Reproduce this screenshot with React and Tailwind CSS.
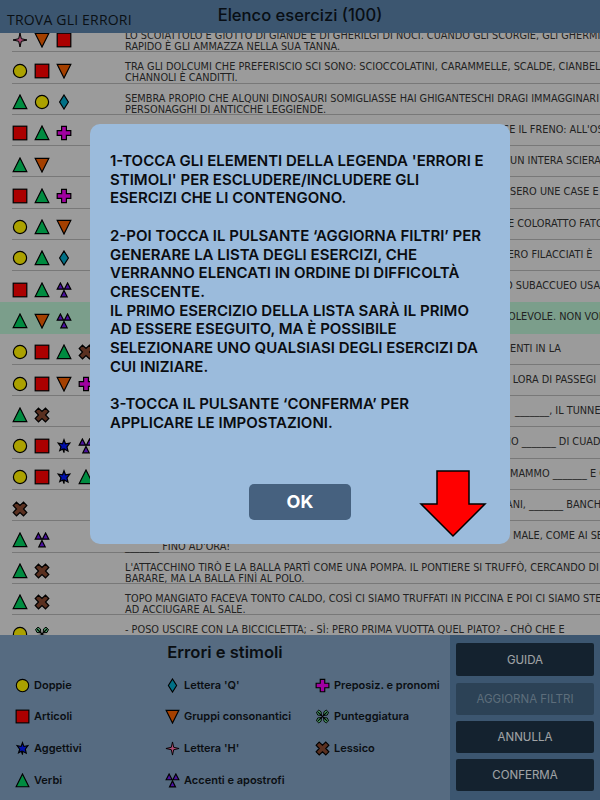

const Shape = ({ t, s = 16 }) => {
  const p = { stroke: "#000", strokeWidth: 1.2, strokeLinejoin: "miter" };
  const el = {
    circle: <circle cx="8" cy="8" r="6.6" fill="#fff000" {...p} />,
    square: <rect x="1.2" y="1.2" width="13.6" height="13.6" fill="#ff0000" {...p} />,
    tri: <path d="M8 1 L14.8 14.6 H1.2 Z" fill="#00d060" {...p} />,
    down: <path d="M1.2 1.4 H14.8 L8 15 Z" fill="#f56000" {...p} />,
    diamond: <path d="M8 1 L12.4 8 L8 15 L3.6 8 Z" fill="#00a8c8" {...p} />,
    plus: <path d="M5.6 1.4 H10.4 V5.6 H14.8 V10.4 H10.4 V14.6 H5.6 V10.4 H1.2 V5.6 H5.6 Z" fill="#f000f0" {...p} />,
    x: <path d="M4.5 1.2 L8 4.5 L11.5 1.2 L14.8 4.5 L11.5 8 L14.8 11.5 L11.5 14.8 L8 11.5 L4.5 14.8 L1.2 11.5 L4.5 8 L1.2 4.5 Z" fill="#874830" {...p} />,
    star: <path d="M8 1.8 L9.5 5.8 L13.8 5 L11 8.8 L12 13 L8.2 11 L8 14.6 L6.8 11 L3.8 12.6 L5 8.8 L2.2 5 L6.5 5.8 Z" fill="#0018ff" {...p} />,
    h: <path d="M8 1 L9.3 6.7 L15 8 L9.3 9.3 L8 15 L6.7 9.3 L1 8 L6.7 6.7 Z" fill="#ff70a8" {...p} strokeWidth="1" />,
    tre: <g fill="#7018f0" {...p}><path d="M4.4 1 L7.6 7.2 H1.2 Z" /><path d="M11.6 1 L14.8 7.2 H8.4 Z" /><path d="M8 8.4 L11.2 14.8 H4.8 Z" /></g>,
    punct: <g fill="#70f0a0" stroke="#000" strokeWidth="1"><path d="M1.5 3.5 L4 1.2 L6.5 3 L6.8 6.8 L3 6.5 Z" /><path d="M14.5 3.5 L12 1.2 L9.5 3 L9.2 6.8 L13 6.5 Z" /><path d="M1.5 12.5 L4 14.8 L6.5 13 L6.8 9.2 L3 9.5 Z" /><path d="M14.5 12.5 L12 14.8 L9.5 13 L9.2 9.2 L13 9.5 Z" /><path d="M3 3 L13 13 M13 3 L3 13" fill="none" strokeWidth="1.2" /></g>,
  }[t];
  return <svg width={s} height={s} viewBox="0 0 16 16" className="shrink-0">{el}</svg>;
};

const rows = [
  { icons: ["h", "down", "square"], a: "LO SCOIATTOLO E GIOTTO DI GIANDE E DI GHERILGI DI NOCI. CUANDO GLI SCORGIE, GLI GHERMISCE", b: "RAPIDO È GLI AMMAZZA NELLA SUA TANNA." },
  { icons: ["circle", "square", "down"], a: "TRA GLI DOLCUMI CHE PREFERISCIO SCI SONO: SCIOCCOLATINI, CARAMMELLE, SCALDE, CIANBELLE,", b: "CHANNOLI È CANDITTI." },
  { icons: ["tri", "circle", "diamond"], a: "SEMBRA PROPIO CHE ALQUNI DINOSAURI SOMIGLIASSE HAI GHIGANTESCHI DRAGI IMMAGGINARI", b: "PERSONAGGHI DI ANTICCHE LEGGIENDE." },
  { icons: ["square", "tri", "plus"], lead: "IL CICLISTA ANDAVA VELOCE PER LA STRADA IN DISCESA QUANDO PER", w: "w-[378px]", a: "SE IL FRENO: ALL'OSPEDALE" },
  { icons: ["tri", "down"], lead: "LE FORMICHE SI MOSSERO IN FILA INDIANA PER IL GIARDINO FORMANDO", w: "w-[385px]", a: "UN INTERA SCIERA" },
  { icons: ["square", "tri", "plus"], lead: "I RAGAZZI DEL PAESE IERI MATTINA COSTRUIRONO E POI DIPIN", w: "w-[385px]", a: "SERO UNE CASE E LE" },
  { icons: ["circle", "tri", "down"], lead: "IL MANTELLO DEL PRINCIPE ERA DI UN TESSUTO MOLTO BELLO", w: "w-[383px]", a: "E COLORATTO FATO" },
  { icons: ["circle", "tri", "diamond"], lead: "I VESTITI DI QUEI POVERI BAMBINI ERANO DAV", w: "w-[376px]", a: "VERO FILACCIATI È" },
  { icons: ["square", "tri", "tre"], lead: "IL SOMMOZZATORE SI TUFFÒ CON IL SUO APPARECCHI", w: "w-[380px]", a: "O SUBACCUEO USA" },
  { icons: ["tri", "down", "tre"], lead: "QUEL CAGNOLINO TANTO SIMPATICO È DAVVERO PIACEV", w: "w-[383px]", a: "OLEVOLE. NON VOL", hl: true },
  { icons: ["circle", "square", "tri", "x"], lead: "SULLA SPIAGGIA CI SONO TANTI OMBRELLONI E I CLI", w: "w-[385px]", a: "ENTI IN LA" },
  { icons: ["circle", "square", "down", "plus"], lead: "ALLA STAZIONE DEL TRENO ARRIVERÀ TRA POCHI MINUTI ALL", w: "w-[377px]", a: "O LORA DI PASSEGI" },
  { icons: ["tri", "x"], lead: "IL TRENO CORRE VELOCE SUI BINARI E ATTRAVERSA", w: "w-[390px]", a: "_______, IL TUNNEL" },
  { icons: ["circle", "square", "star", "tre"], lead: "LA MAESTRA HA DISEGNATO SULLA LAVAGNA UN GRANDISS", w: "w-[383px]", a: "IO _______ DI CUADERNI" },
  { icons: ["circle", "square", "star", "tri"], lead: "ALLA FESTA DELLA SCUOLA ABBIAMO PORTATO IL PAPÀ E LA", w: "w-[385px]", a: "MAMMO _______ E C" },
  { icons: ["x"], lead: "NEL GIARDINO DEI NONNI CI SONO TANTI GRANDI ALBERI E STR", w: "w-[381px]", a: "ANI, _______ BANCHI" },
  { icons: ["tri", "tre"], lead: "IERI IL MIO AMICO SI È SENTITO PROPRIO MOLTO", w: "w-[388px]", a: "MALE, COME AI SENTITO", b: "_______ FINO AD'ORA!" },
  { icons: ["tri", "x"], a: "L'ATTACCHINO TIRÒ E LA BALLA PARTÌ COME UNA POMPA. IL PONTIERE SI TRUFFÒ, CERCANDO DI", b: "BARARE, MA LA BALLA FINÌ AL POLO." },
  { icons: ["tri", "x"], a: "TOPO MANGIATO FACEVA TONTO CALDO, COSÌ CI SIAMO TRUFFATI IN PICCINA E POI CI SIAMO STESI", b: "AD ACCIUGARE AL SALE." },
  { icons: ["circle", "punct"], a: "- POSO USCIRE CON LA BICCICLETTA; - SÌ: PERO PRIMA VUOTTA QUEL PIATO? - CHÒ CHE E" },
];

const legend = [
  [["circle", "Doppie"], ["square", "Articoli"], ["star", "Aggettivi"], ["tri", "Verbi"]],
  [["diamond", "Lettera 'Q'"], ["down", "Gruppi consonantici"], ["h", "Lettera 'H'"], ["tre", "Accenti e apostrofi"]],
  [["plus", "Preposiz. e pronomi"], ["punct", "Punteggiatura"], ["x", "Lessico"]],
];

const sans = "font-['Inter',sans-serif]";

export default function App() {
  return (
    <div className={`relative w-[600px] h-[800px] overflow-hidden flex flex-col bg-[#e8e8e8] ${sans}`}>
      <header className="relative z-10 h-[33px] shrink-0 bg-[#5a80a8] flex items-center justify-center">
        <span className="absolute left-[7px] top-[13px] text-[14px] leading-[14px] tracking-[0.2px] text-[#101820] font-['Open_Sans',sans-serif]">TROVA GLI ERRORI</span>
        <span className="text-[16.6px] font-medium leading-[30px] pb-[3px] text-[#0d1620]">Elenco esercizi (100)</span>
      </header>

      <div className="flex-1 min-h-0 overflow-hidden">
        <div className="-mt-[12px]">
          {rows.map((r, i) => (
            <div key={i} className={`h-[31.28px] flex ${r.hl ? "bg-[#b8ecd0]" : ""}`}>
              <div className={`flex-1 min-w-0 ml-[12px] flex border-b ${i === 9 || i === 8 ? "border-transparent" : "border-[#b4b4b4]"}`}>
                <div className="w-[113px] shrink-0 flex items-center gap-[6px] pt-[7px]">
                  {r.icons.map((t, k) => <Shape key={k} t={t} />)}
                </div>
                <div className="min-w-0 pt-[9px] text-[9.75px] leading-[11.2px] whitespace-nowrap text-[#333333] font-['DejaVu_Sans',sans-serif]">
                  <div>
                    {r.lead && <span className={`inline-block overflow-hidden align-top ${r.w}`}>{r.lead}</span>}
                    {r.a}
                  </div>
                  {r.b && <div>{r.b}</div>}
                </div>
              </div>
            </div>
          ))}
        </div>
      </div>

      <footer className="relative h-[165px] shrink-0 flex">
        <div className="w-[450px] bg-[#81a0c0] flex flex-col">
          <h2 className="text-center text-[16.6px] font-semibold leading-[20px] mt-[7px] text-[#10161c]">Errori e stimoli</h2>
          <div className="flex pl-[15px] mt-[15px]">
            {legend.map((col, c) => (
              <div key={c} className="w-[150px] shrink-0 flex flex-col gap-[15.7px]">
                {col.map(([t, label]) => (
                  <div key={label} className="flex items-center gap-[4px] h-[16px]">
                    <Shape t={t} s={15} />
                    <span className="text-[11px] font-semibold text-[#10161c] whitespace-nowrap">{label}</span>
                  </div>
                ))}
              </div>
            ))}
          </div>
        </div>
        <div className="flex-1 bg-[#5a80a8] flex flex-col gap-[6px] px-[6px] pt-[8px] text-[11.5px]">
          <button className="h-[33px] pt-[2px] rounded-[2px] bg-[#1e3447] text-[#f0f4f8] mb-[1px]">GUIDA</button>
          <button className="h-[32px] pt-[1px] rounded-[2px] bg-[#426380] text-[#8ba3b8]">AGGIORNA FILTRI</button>
          <button className="h-[32px] pt-[2px] rounded-[2px] bg-[#1e3447] text-[#f0f4f8]">ANNULLA</button>
          <button className="h-[32px] pt-[2px] rounded-[2px] bg-[#1e3447] text-[#f0f4f8]">CONFERMA</button>
        </div>
      </footer>

      <div className="absolute inset-0 z-20 bg-black/[.33] flex justify-center pt-[124px]">
        <div className="relative w-[420px] h-[420px] rounded-[10px] bg-[#9bbbdc] px-[20px] pt-[28px] text-[#0a0c10] text-[15px] font-semibold leading-[18.7px] whitespace-nowrap">
          <p>1-TOCCA GLI ELEMENTI DELLA LEGENDA 'ERRORI E<br />STIMOLI' PER ESCLUDERE/INCLUDERE GLI<br />ESERCIZI CHE LI CONTENGONO.</p>
          <p className="mt-[18.7px]">2-POI TOCCA IL PULSANTE ‘AGGIORNA FILTRI’ PER<br />GENERARE LA LISTA DEGLI ESERCIZI, CHE<br />VERRANNO ELENCATI IN ORDINE DI DIFFICOLTÀ<br />CRESCENTE.<br />IL PRIMO ESERCIZIO DELLA LISTA SARÀ IL PRIMO<br />AD ESSERE ESEGUITO, MA È POSSIBILE<br />SELEZIONARE UNO QUALSIASI DEGLI ESERCIZI DA<br />CUI INIZIARE.</p>
          <p className="mt-[18.7px]">3-TOCCA IL PULSANTE ‘CONFERMA’ PER<br />APPLICARE LE IMPOSTAZIONI.</p>
          <button className="absolute left-[159px] top-[360px] w-[102px] h-[36px] rounded-[5px] bg-[#46617f] text-white text-[18px] font-bold">OK</button>
          <svg className="absolute left-[329px] top-[346px]" width="68" height="68" viewBox="0 0 68 68">
            <path d="M18 1 H50 V34 H66 L34 66 L2 34 H18 Z" fill="#ff0000" stroke="#000" strokeWidth="1.5" />
          </svg>
        </div>
      </div>
    </div>
  );
}
